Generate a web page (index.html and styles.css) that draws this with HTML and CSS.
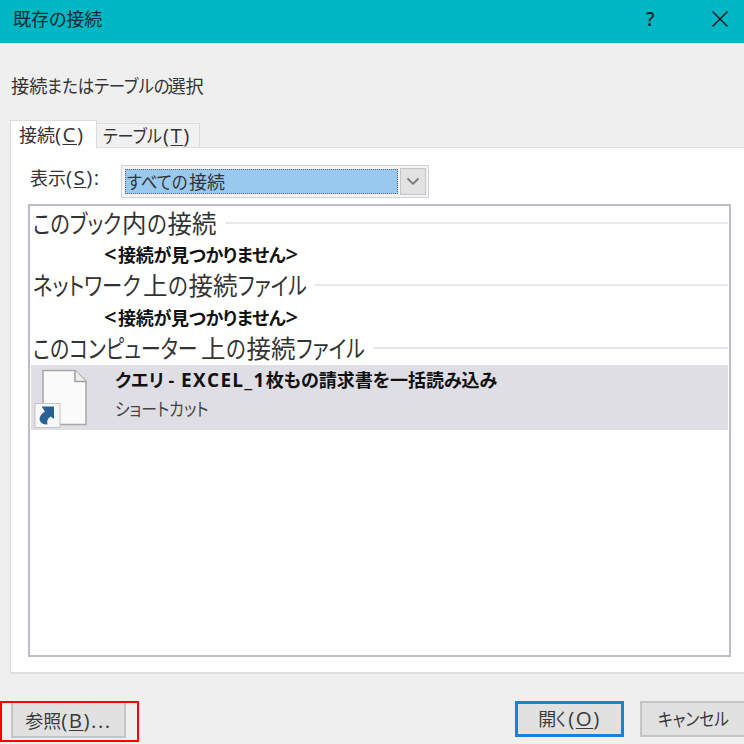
FILE: index.html
```html
<!DOCTYPE html>
<html lang="ja">
<head>
<meta charset="utf-8">
<title>既存の接続</title>
<link rel="stylesheet" href="styles.css">
</head>
<body>
<div class="dialog">
  <header class="titlebar">
    <span class="title">既存の接続</span>
    <span class="help">?</span>
    <svg class="close" width="18" height="18" viewBox="0 0 18 18"><path d="M1.5 1.5l15 15M16.5 1.5l-15 15" stroke="#0b2427" stroke-width="1.7" fill="none"/></svg>
  </header>
  <div class="heading">接続<span class="k heading-a">またはテーブルの</span>選択</div>
  <nav class="tabs">
    <div class="tab active">接続<span class="key">(<u>C</u>)</span></div>
    <div class="tab"><span class="k tab-kana">テーブル</span><span class="key">(<u>T</u>)</span></div>
  </nav>
  <main class="panel">
    <div class="filter">
      <label>表示<span class="key">(<u>S</u>):</span></label>
      <div class="combo">
        <div class="value"><span class="k value-kana">すべての</span>接続</div>
        <div class="arrow"><svg width="14" height="9" viewBox="0 0 14 9"><path d="M1.5 1.5L7 6.8l5.500-5.300" stroke="#777" stroke-width="1.8" fill="none"/></svg></div>
      </div>
    </div>
    <div class="list">
      <div class="group"><span class="k g-book">このブック</span>内<span class="k g-no">の</span>接続</div>
      <div class="empty"><span class="angle">&lt;</span>接続が見つかりません<span class="angle">&gt;</span></div>
      <div class="group"><span class="k g-net">ネットワーク</span>上<span class="k g-no">の</span>接続<span class="k g-file">ファイル</span></div>
      <div class="empty"><span class="angle">&lt;</span>接続が見つかりません<span class="angle">&gt;</span></div>
      <div class="group last"><span class="k g-pc">このコンピューター</span>上<span class="k g-no">の</span>接続<span class="k g-file">ファイル</span></div>
      <div class="item">
        <svg class="file" width="56" height="60" viewBox="0 0 56 60">
          <path d="M12 2.500H44L55 13V56.500H12Z" fill="#fafafa" stroke="#a8a8a8" stroke-width="1.500"/>
          <path d="M44 2.500V13.500H55" fill="#eee" stroke="#a0a0a0" stroke-width="1.500"/>
          <rect x="4" y="35.500" width="25" height="24" fill="#f8f8f8" stroke="#c4c4c4"/>
          <path d="M10.500 38.500H23V51L19.500 48.500Q15 52 16.500 56.500Q9 56.500 8.500 51Q9 46.500 14 43.500Z" fill="#285f94"/>
        </svg>
        <div class="info">
          <div class="name">クエリ - <span class="latin">EXCEL_1</span>枚もの請求書を一括読み込み</div>
          <div class="kind"><span class="k kind-kana">ショートカット</span></div>
        </div>
      </div>
    </div>
  </main>
  <footer class="footer">
    <div class="highlight"><button class="btn browse">参照<span class="key">(<u>B</u>)...</span></button></div>
    <button class="btn open">開<span class="k open-kana">く</span><span class="key">(<u>O</u>)</span></button>
    <button class="btn cancel"><span class="k cancel-kana">キャンセル</span></button>
  </footer>
</div>
</body>
</html>
```
FILE: styles.css
```css
* { box-sizing: border-box; }
body {
  margin: 0;
  width: 744px;
  height: 744px;
  overflow: hidden;
  background: #efefef;
  color: #333;
  font-family: "Open Sans", "Noto Sans CJK JP", sans-serif;
  font-size: 18px;
  line-height: 24px;
  font-feature-settings: "palt";
  white-space: nowrap;
}
u { text-decoration-thickness: 1px; text-underline-offset: 2px; }

/* narrow kana runs */
.k { display: inline-block; transform: scaleX(.83); transform-origin: 0 50%; flex: none; }
.heading-a { width: 120px; transform: scaleX(.9); }
.tab-kana { width: 60px; transform: scaleX(.9); }
.value-kana { width: 62px; transform: scaleX(.91); }
.g-book { width: 89px; transform: scaleX(.82); }
.g-no { width: 21px; }
.g-net { width: 110px; }
.g-file { width: 69px; transform: scaleX(.81); }
.g-pc { width: 168px; transform: scaleX(.81); }
.kind-kana { width: 94px; transform: scaleX(.88); }
.open-kana { width: 12px; transform: scaleX(.8); }
.cancel-kana { width: 72px; transform: scaleX(.87); }
.key { font-size: 20.500px; letter-spacing: 1.5px; line-height: 20px; }

.dialog { width: 744px; height: 744px; display: flex; flex-direction: column; }
.titlebar {
  height: 44px;
  flex: none;
  display: flex;
  align-items: center;
  padding: 0 15px 5px 13px;
  background: #00b7c6;
  border-bottom: 1px solid #f8f8f8;
  color: #0b2b2f;
}
.title { flex: 1; }
.help { width: 10px; margin-right: 55px; font-weight: 600; font-size: 19px; }
.heading { height: 76px; flex: none; padding: 30px 0 0 11px; font-size: 18.200px; }
.tabs { height: 27px; flex: none; display: flex; align-items: flex-end; padding-left: 10px; }
.tab {
  width: 103px;
  height: 24px;
  padding-left: 6px;
  border: 1px solid #dcdcdc;
  border-bottom: 0;
  border-left: 0;
  background: #f1f1f1;
}
.tab.active {
  width: 87px;
  height: 28px;
  padding: 2px 0 0 8px;
  margin-bottom: -1px;
  border-left: 1px solid #dcdcdc;
  background: #fff;
  position: relative;
  z-index: 1;
}
.panel {
  flex: none;
  height: 527px;
  margin-left: 10px;
  padding: 17px 13px 0 18px;
  background: #fff;
  border: 1px solid #dedede;
  border-right: 0;
  border-bottom-width: 2px;
}
.filter { display: flex; height: 39px; }
.filter label { width: 92px; padding: 1px 0 0 1px; }
.combo { width: 308px; height: 33px; display: flex; padding: 2px; border: 1px solid #d2d2d2; background: #f4f4f4; }
.value { flex: 1; margin: 1px 2px 1px 1px; border: 1px dotted #666; background: #99c9ef; padding-left: 1px; line-height: 24px; }
.arrow { width: 26px; border: 1px solid #c6c6c6; background: #e2e2e2; display: grid; place-items: center; }
.list { height: 453px; width: 703px; margin-left: -1px; border: 2px solid #bdbec4; padding: 2px 0 0 1px; }
.group { height: 31px; display: flex; align-items: center; font-size: 24.500px; padding: 0 1px 0 2px; }
.group.last { height: 32px; }
.group::after { content: ""; flex: 1; height: 2px; background: #e9e9e9; margin: 0 0 2px 8px; }
.empty { height: 31.500px; padding: 4px 0 0 73px; font-weight: 600; color: #111; letter-spacing: -.3px; }
.angle { display: inline-block; font-size: 22px; line-height: 20px; width: 14px; }
.item { height: 65px; display: flex; background: #dfdee4; margin-right: 1px; }
.file { margin-top: 3px; flex: none; }
.info { margin-left: 28px; }
.name { height: 30px; padding-top: 3px; font-weight: 700; color: #111; }
.latin { letter-spacing: 1.300px; font-size: 19px; margin-left: 2px; line-height: 20px; }
.kind { padding-top: 2px; color: #444; }
.footer { display: flex; height: 70px; padding-top: 27px; flex: none; }
.highlight { width: 139px; height: 41px; flex: none; border: 2px solid #f00; padding-left: 9px; }
.btn { font: inherit; font-feature-settings: inherit; color: #3a3a3a; background: #e1e1e1; border: 2px solid #c5c5c5; height: 36px; padding: 0; display: block; flex: none; }
.browse { width: 115px; height: 35px; border-top: 0; padding-top: 2px; }
.open { width: 109px; margin-left: 376px; border: 3px solid #1782dc; }
.cancel { width: 120px; margin-left: 16px; text-align: left; padding-left: 16px; }
```
